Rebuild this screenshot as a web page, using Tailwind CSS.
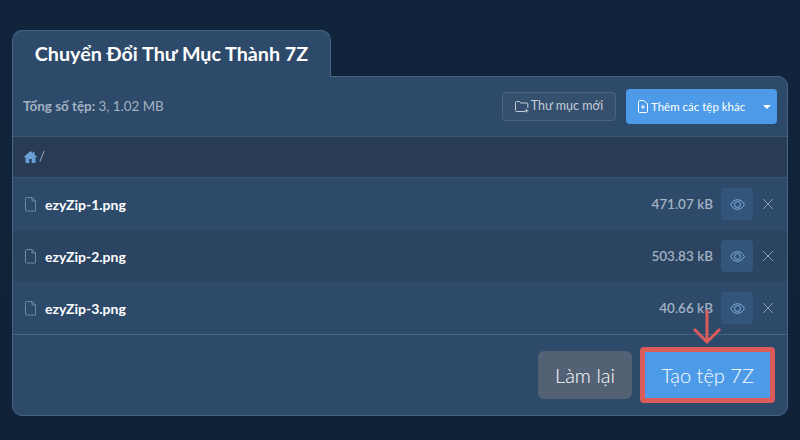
<!DOCTYPE html>
<html lang="vi">
<head>
    <meta charset="UTF-8">
    <title>Chuyển Đổi Thư Mục Thành 7Z</title>
    <script src="https://cdn.jsdelivr.net/npm/@tailwindcss/browser@4"></script>
</head>
<body class="bg-linear-to-b from-[#10253c] to-[#0f2136] w-[800px] h-[440px] overflow-hidden font-['Lato',sans-serif]">
    <div class="pt-[30px] px-3 relative">
        <!-- tab -->
        <div class="relative z-10 w-[319px] h-[47px] -mb-px bg-[#2d4a6b] border border-b-0 border-[#486583] rounded-t-[10px] flex items-center justify-center">
            <h1 class="text-[19.700px] font-bold text-white leading-none">Chuyển Đổi Thư Mục Thành 7Z</h1>
        </div>

        <!-- panel -->
        <div class="w-[776px] h-[340px] bg-[#2d4a6b] border border-[#486583] rounded-tr-[10px] rounded-b-[10px] flex flex-col overflow-hidden">
            <!-- toolbar -->
            <div class="h-[60px] shrink-0 flex items-center pl-[10px] pr-[10px] border-b border-[#3d5876]">
                <p class="text-[13.400px] text-[#a3b1c1]"><span class="font-bold">Tổng số tệp:</span> 3, 1.02 MB</p>
                <div class="ml-auto flex items-center gap-[10px]">
                    <button class="h-[29px] w-[114px] flex items-center justify-center gap-[2px] rounded border border-[#4a637f] bg-[#35506f] text-[12.500px] text-[#c4ced9]">
                        <svg class="w-[14px] h-[12px]" viewBox="0 0 14 12" fill="none" stroke="#c4ced9" stroke-width="1"><path d="M10 10.500H1.500a1 1 0 0 1-1-1V1.500a1 1 0 0 1 1-1h3l1.300 1.500h6a1 1 0 0 1 1 1V7"/><path d="M11.500 8v3.500M9.800 9.800h3.500"/></svg>
                        Thư mục mới
                    </button>
                    <button class="h-[35px] w-[151px] flex items-center rounded bg-[#4d9be8] text-[11.500px] text-white pl-[12px]">
                        <svg class="w-[10px] h-[13px] mr-[3px]" viewBox="0 0 10 13" fill="none" stroke="#fff" stroke-width="1"><path d="M1.500.500h4.500l3.500 3.500v7.500a1 1 0 0 1-1 1h-7a1 1 0 0 1-1-1v-10a1 1 0 0 1 1-1z"/><path d="M5 5v4M3 7h4"/></svg>
                        Thêm các tệp khác
                        <span class="ml-auto mr-[6px] w-0 h-0 border-x-[4px] border-x-transparent border-t-[4px] border-t-white"></span>
                    </button>
                </div>
            </div>

            <!-- breadcrumb -->
            <div class="h-[41px] shrink-0 flex items-center gap-[2px] pl-[11px] bg-[#283c55] border-b border-[#3d5876] text-[13px] text-[#a3b1c1]">
                <svg class="w-[13px] h-[12px]" viewBox="0 0 13 12" fill="#6b9ed2"><path d="M6.500 0 0 5.800l.7.800.8-.7V12h3.800V8h2.400v4h3.800V5.900l.8.700.7-.8L10.500 3.500V.7H9v1.500z"/></svg>
                <span>/</span>
            </div>

            <!-- files -->
            <div class="h-[52px] shrink-0 flex items-center pl-[12px] pr-[14px]">
                <svg class="w-[11px] h-[15px] mr-[9px]" viewBox="0 0 11 15" fill="none" stroke="#6f8aa6" stroke-width="1"><path d="M1.500.500h5.500l3.500 3.500v9a1 1 0 0 1-1 1h-8a1 1 0 0 1-1-1v-11.500a1 1 0 0 1 1-1z"/><path d="M7 .5V4h3.500"/></svg>
                <span class="text-[14px] font-bold text-white">ezyZip-1.png</span>
                <span class="ml-auto text-[13.500px] font-semibold text-[#a3b1c1]">471.07 kB</span>
                <span class="ml-[8px] w-[32px] h-[32px] rounded flex items-center justify-center bg-[#34557a]">
                    <svg class="w-[15px] h-[11px]" viewBox="0 0 15 11" fill="none" stroke="#7fb0e0" stroke-width="1"><path d="M.6 5.500C2.500 2.200 4.800.7 7.500.7s5 1.500 6.900 4.800c-1.900 3.300-4.200 4.800-6.900 4.800S2.500 8.800.6 5.500z"/><circle cx="7.500" cy="5.500" r="3"/></svg>
                </span>
                <svg class="ml-[10px] w-[10px] h-[10px]" viewBox="0 0 10 10" stroke="#8499af" stroke-width="1"><path d="M0 0l10 10M10 0L0 10"/></svg>
            </div>
            <div class="h-[52px] shrink-0 flex items-center pl-[12px] pr-[14px] bg-[#2a4462]">
                <svg class="w-[11px] h-[15px] mr-[9px]" viewBox="0 0 11 15" fill="none" stroke="#6f8aa6" stroke-width="1"><path d="M1.500.500h5.500l3.500 3.500v9a1 1 0 0 1-1 1h-8a1 1 0 0 1-1-1v-11.500a1 1 0 0 1 1-1z"/><path d="M7 .5V4h3.500"/></svg>
                <span class="text-[14px] font-bold text-white">ezyZip-2.png</span>
                <span class="ml-auto text-[13.500px] font-semibold text-[#a3b1c1]">503.83 kB</span>
                <span class="ml-[8px] w-[32px] h-[32px] rounded flex items-center justify-center bg-[#34557a]">
                    <svg class="w-[15px] h-[11px]" viewBox="0 0 15 11" fill="none" stroke="#7fb0e0" stroke-width="1"><path d="M.6 5.500C2.500 2.200 4.800.7 7.500.7s5 1.500 6.900 4.800c-1.900 3.300-4.200 4.800-6.900 4.800S2.500 8.800.6 5.500z"/><circle cx="7.500" cy="5.500" r="3"/></svg>
                </span>
                <svg class="ml-[10px] w-[10px] h-[10px]" viewBox="0 0 10 10" stroke="#8499af" stroke-width="1"><path d="M0 0l10 10M10 0L0 10"/></svg>
            </div>
            <div class="h-[52px] shrink-0 flex items-center pl-[12px] pr-[14px]">
                <svg class="w-[11px] h-[15px] mr-[9px]" viewBox="0 0 11 15" fill="none" stroke="#6f8aa6" stroke-width="1"><path d="M1.500.500h5.500l3.500 3.500v9a1 1 0 0 1-1 1h-8a1 1 0 0 1-1-1v-11.500a1 1 0 0 1 1-1z"/><path d="M7 .5V4h3.500"/></svg>
                <span class="text-[14px] font-bold text-white">ezyZip-3.png</span>
                <span class="ml-auto text-[13.500px] font-semibold text-[#a3b1c1]">40.66 kB</span>
                <span class="ml-[8px] w-[32px] h-[32px] rounded flex items-center justify-center bg-[#34557a]">
                    <svg class="w-[15px] h-[11px]" viewBox="0 0 15 11" fill="none" stroke="#7fb0e0" stroke-width="1"><path d="M.6 5.500C2.500 2.200 4.800.7 7.500.7s5 1.500 6.900 4.800c-1.900 3.300-4.200 4.800-6.900 4.800S2.500 8.800.6 5.500z"/><circle cx="7.500" cy="5.500" r="3"/></svg>
                </span>
                <svg class="ml-[10px] w-[10px] h-[10px]" viewBox="0 0 10 10" stroke="#8499af" stroke-width="1"><path d="M0 0l10 10M10 0L0 10"/></svg>
            </div>

            <!-- footer -->
            <div class="flex-1 flex items-center justify-end gap-[8px] pr-[12px] border-t border-[#486583]">
                <button class="w-[94px] h-[48px] rounded-md bg-[#526174] text-[20px] font-light text-white">Làm lại</button>
                <button class="w-[135px] h-[56px] rounded-[4px] border-[5px] border-[#db5a5a] bg-[#4d9be8] text-[20px] font-light text-white">Tạo tệp 7Z</button>
            </div>
        </div>

        <!-- red arrow pointing at the submit button -->
        <svg class="absolute left-[692px] top-[309px] w-[30px] h-[36px]" viewBox="0 0 30 36" fill="none" stroke="#db5a5a" stroke-width="3"><path d="M15 1v32M2 20l13 13 13-13"/></svg>
    </div>
</body>
</html>
